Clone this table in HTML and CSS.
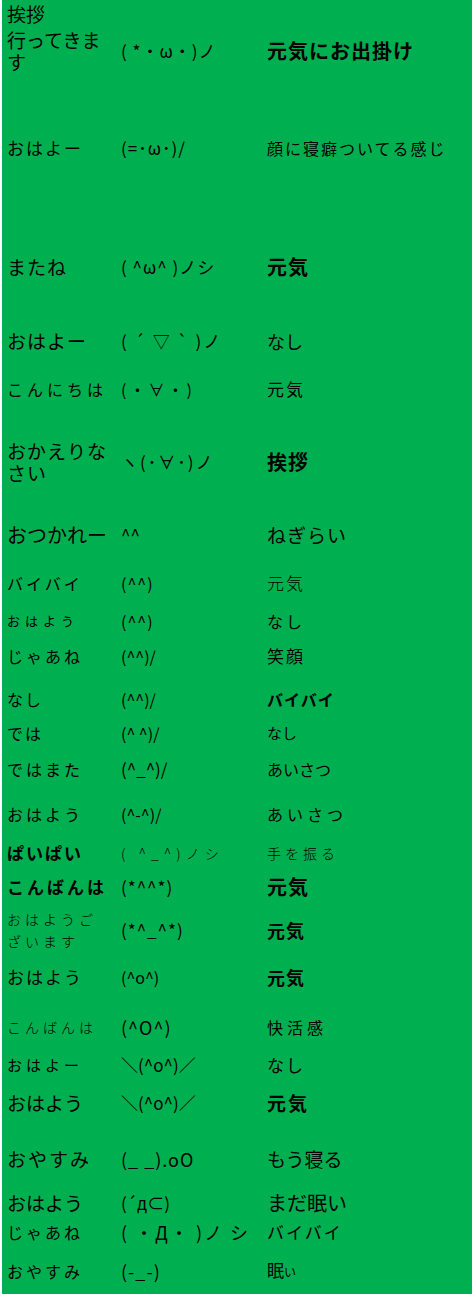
FILE: index.html
```html
<!DOCTYPE html>
<html lang="ja">
<head>
<meta charset="utf-8">
<title>挨拶と顔文字</title>
<link rel="stylesheet" href="styles.css">
</head>
<body>
<div class="sheet">
  <div class="row mt3"><div class="c c1 s19">挨拶</div><div class="c"></div><div class="c"></div></div>
  <div class="row mt4"><div class="c c1 wrap s19">行ってきます</div><div class="c k s17 ls1">( *・ω・)ノ</div><div class="c s20 b ls1">元気にお出掛け</div></div>
  <div class="row mt64"><div class="c c1 s17 ls2">おはよー</div><div class="c k s17 ls1">(=･ω･)/</div><div class="c s16 ls2">顔に寝癖ついてる感じ</div></div>
  <div class="row mt97"><div class="c c1 s19 ls1">またね</div><div class="c k s17 ls1">( ^ω^ )ノシ</div><div class="c s20 b ls1">元気</div></div>
  <div class="row mt52"><div class="c c1 s19 ls1">おはよー</div><div class="c k s17 ls2">( ´ ▽ ` )ノ</div><div class="c s18">なし</div></div>
  <div class="row mt26"><div class="c c1 s16 ls4">こんにちは</div><div class="c k s16 ls3">(・∀・)</div><div class="c s17 ls2">元気</div></div>
  <div class="row mt40"><div class="c c1 wrap s19 ls1">おかえりなさい</div><div class="c k s17 ls2">ヽ(･∀･)ノ</div><div class="c s20 b ls1">挨拶</div></div>
  <div class="row mt40"><div class="c c1 s20">おつかれー</div><div class="c k s17">^^</div><div class="c s19 ls1">ねぎらい</div></div>
  <div class="row mt26"><div class="c c1 s16 ls3">バイバイ</div><div class="c k s16 ls1">(^^)</div><div class="c s17 ls2 thin">元気</div></div>
  <div class="row mt16"><div class="c c1 s13 ls5">おはよう</div><div class="c k s16 ls1">(^^)</div><div class="c s16 ls3">なし</div></div>
  <div class="row mt13"><div class="c c1 s16 ls3">じゃあね</div><div class="c k s16">(^^)/</div><div class="c s17 ls2">笑顔</div></div>
  <div class="row mt21"><div class="c c1 s16 ls2">なし</div><div class="c k s16">(^^)/</div><div class="c s16 b ls1">バイバイ</div></div>
  <div class="row mt12"><div class="c c1 s16 ls2">では</div><div class="c k s16">(^ ^)/</div><div class="c s15">なし</div></div>
  <div class="row mt14"><div class="c c1 s16 ls3">ではまた</div><div class="c k s17">(^_^)/</div><div class="c s16">あいさつ</div></div>
  <div class="row mt23"><div class="c c1 s16 ls3">おはよう</div><div class="c k s16">(^-^)/</div><div class="c s16 ls4">あいさつ</div></div>
  <div class="row mt17"><div class="c c1 s17 ls2 b">ぱいぱい</div><div class="c k s14 ls5 thin">( ^_^)ノシ</div><div class="c s14 ls4 thin">手を振る</div></div>
  <div class="row mt12"><div class="c c1 s17 ls3 b">こんばんは</div><div class="c k s17 ls1">(*^^*)</div><div class="c s20 b ls1">元気</div></div>
  <div class="row mt10"><div class="c c1 wrap s14 ls4 thin">おはようございます</div><div class="c k s17 ls1">(*^_^*)</div><div class="c s18 b ls1">元気</div></div>
  <div class="row mt14"><div class="c c1 s17 ls2">おはよう</div><div class="c k s16">(^o^)</div><div class="c s18 b ls1">元気</div></div>
  <div class="row mt28"><div class="c c1 s14 ls4 thin">こんばんは</div><div class="c k s18 ls1">(^O^)</div><div class="c s16 ls4">快活感</div></div>
  <div class="row mt16"><div class="c c1 s15 ls4">おはよー</div><div class="c k s17">＼(^o^)／</div><div class="c s17 ls2">なし</div></div>
  <div class="row mt16"><div class="c c1 s19">おはよう</div><div class="c k s17">＼(^o^)／</div><div class="c s19 b ls2">元気</div></div>
  <div class="row mt34"><div class="c c1 s19 ls2">おやすみ</div><div class="c k s18 ls1">(_ _).oO</div><div class="c s19">もう寝る</div></div>
  <div class="row mt22"><div class="c c1 s19">おはよう</div><div class="c k s17">(´д⊂)</div><div class="c s20">まだ眠い</div></div>
  <div class="row mt7"><div class="c c1 s16 ls3">じゃあね</div><div class="c k s18 ls2">( ・Д・ )ノ シ</div><div class="c s17 ls2">バイバイ</div></div>
  <div class="row mt16"><div class="c c1 s16 ls3">おやすみ</div><div class="c k s18 ls1">(-_-)</div><div class="c s17">眠<span class="small">い</span></div></div>
</div>
</body>
</html>
```

FILE: styles.css
```css
html, body {
  margin: 0;
  padding: 0;
  background: #ffffff;
}

.sheet {
  margin-left: 2px;
  width: 470px;
  min-height: 1294px;
  box-sizing: border-box;
  background: #00b050;
  color: #000000;
  font-family: "Noto Sans CJK JP", "Noto Sans", sans-serif;
  display: flex;
  flex-direction: column;
}

.row {
  display: grid;
  grid-template-columns: 114px 146px 1fr;
  align-items: center;
  line-height: 22px;
}

.c {
  padding-left: 5px;
  white-space: nowrap;
}

.c1 {
  padding-right: 5px;
}

.wrap {
  white-space: normal;
  line-break: anywhere;
}

.k { font-family: "Noto Sans CJK JP", "DejaVu Sans", sans-serif; }

.b { font-weight: 700; }
.thin { font-weight: 300; }
.small { font-size: 12px; }

.s13 { font-size: 13px; }
.s14 { font-size: 14px; }
.s15 { font-size: 15px; }
.s16 { font-size: 16px; }
.s17 { font-size: 17px; }
.s18 { font-size: 18px; }
.s19 { font-size: 19px; }
.s20 { font-size: 20px; }

.ls1 { letter-spacing: 1px; }
.ls2 { letter-spacing: 2px; }
.ls3 { letter-spacing: 3px; }
.ls4 { letter-spacing: 4px; }
.ls5 { letter-spacing: 5px; }

.mt3 { margin-top: 3px; }
.mt4 { margin-top: 4px; }
.mt7 { margin-top: 7px; }
.mt10 { margin-top: 10px; }
.mt12 { margin-top: 12px; }
.mt13 { margin-top: 13px; }
.mt14 { margin-top: 14px; }
.mt16 { margin-top: 16px; }
.mt17 { margin-top: 17px; }
.mt21 { margin-top: 21px; }
.mt22 { margin-top: 22px; }
.mt23 { margin-top: 23px; }
.mt26 { margin-top: 26px; }
.mt28 { margin-top: 28px; }
.mt34 { margin-top: 34px; }
.mt40 { margin-top: 40px; }
.mt52 { margin-top: 52px; }
.mt64 { margin-top: 64px; }
.mt97 { margin-top: 97px; }
```
